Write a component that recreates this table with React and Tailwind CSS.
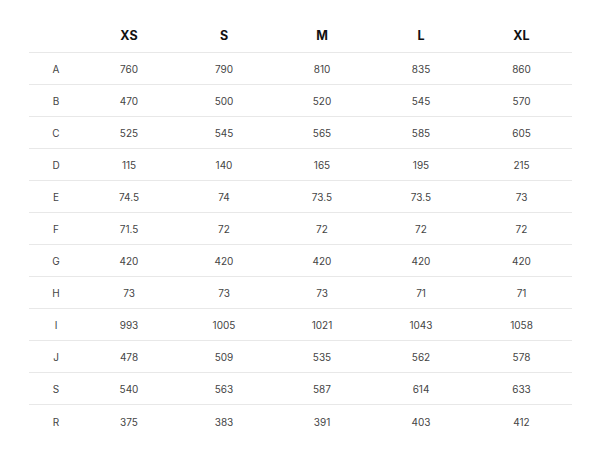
export default function App() {
  const cols = ["XS", "S", "M", "L", "XL"];
  const rows = [
    ["A", "760", "790", "810", "835", "860"],
    ["B", "470", "500", "520", "545", "570"],
    ["C", "525", "545", "565", "585", "605"],
    ["D", "115", "140", "165", "195", "215"],
    ["E", "74.5", "74", "73.5", "73.5", "73"],
    ["F", "71.5", "72", "72", "72", "72"],
    ["G", "420", "420", "420", "420", "420"],
    ["H", "73", "73", "73", "71", "71"],
    ["I", "993", "1005", "1021", "1043", "1058"],
    ["J", "478", "509", "535", "562", "578"],
    ["S", "540", "563", "587", "614", "633"],
    ["R", "375", "383", "391", "403", "412"],
  ];
  const grid = "grid grid-cols-[54px_92px_98px_98px_100px_101px]";
  return (
    <div className="w-[600px] h-[463px] bg-white pt-[20px] pl-[29px]" style={{ fontFamily: "Inter, 'Liberation Sans', sans-serif" }}>
      <div className="w-[543px]">
        <div className={`${grid} h-[33px] items-center border-b border-[#e8e8e8] text-[12.5px] font-bold text-[#111]`}>
          <div></div>
          {cols.map((c) => (
            <div key={c} className="text-center">{c}</div>
          ))}
        </div>
        {rows.map((r, i) => (
          <div
            key={r[0]}
            className={`${grid} h-[32px] pt-[2px] items-center text-[10px] text-[#444] ${i < rows.length - 1 ? "border-b border-[#e8e8e8]" : ""}`}
          >
            {r.map((v, j) => (
              <div key={j} className="text-center">{v}</div>
            ))}
          </div>
        ))}
      </div>
    </div>
  );
}
